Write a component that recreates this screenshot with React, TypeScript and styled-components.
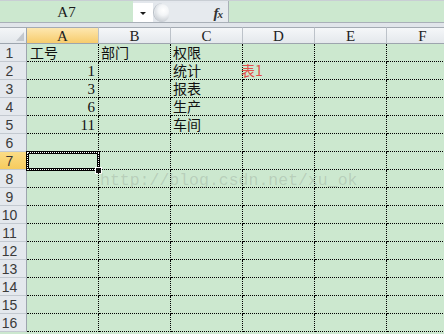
import React from 'react';
import styled, { createGlobalStyle } from 'styled-components';

const Global = createGlobalStyle`
  html, body { margin: 0; padding: 0; background: #fff; }
  body { width: 444px; height: 334px; overflow: hidden; }
`;

const GREEN = '#CCE8CF';

const Sheet = styled.div`
  width: 444px;
  height: 334px;
  overflow: hidden;
  display: flex;
  flex-direction: column;
  background: #e2e6eb;
`;

const FormulaBar = styled.div`
  display: flex;
  height: 23px;
  box-sizing: border-box;
  border-top: 1px solid #c9ced4;
  border-bottom: 1px solid #a9b0b8;
  background: ${GREEN};
  flex-shrink: 0;
`;

const NameBox = styled.div`
  width: 133px;
  display: flex;
  align-items: center;
  justify-content: center;
  font-family: 'Liberation Serif', serif;
  font-size: 15px;
  color: #1a1a1a;
  padding-top: 1px;
  box-sizing: border-box;
`;

const Controls = styled.div`
  display: flex;
  padding-top: 2px;
  background: #e3e7ec;
`;

const DropButton = styled.div`
  width: 20px;
  background: #fff;
  display: flex;
  align-items: center;
  justify-content: center;
  padding-top: 2px;
  box-sizing: border-box;
`;

const Arrow = styled.div`
  width: 0;
  height: 0;
  border-left: 3px solid transparent;
  border-right: 3px solid transparent;
  border-top: 3px solid #1a1a1a;
`;

const FxZone = styled.div`
  width: 75px;
  display: flex;
  align-items: center;
  justify-content: space-between;
  background: #e6eaee;
  border-radius: 10px 0 0 10px;
  border-left: 1px solid #b9bfc6;
  box-sizing: border-box;
  padding-right: 6px;
`;

const Knob = styled.div`
  width: 14px;
  height: 18px;
  border-radius: 9px;
  background: radial-gradient(circle at 60% 35%, #ffffff 0%, #f3f5f7 35%, #c9ced4 80%, #b5bcc4 100%);
  margin-left: 1px;
`;

const Fx = styled.span`
  font-family: 'Liberation Serif', serif;
  font-style: italic;
  font-weight: bold;
  font-size: 15px;
  color: #333;
  letter-spacing: -1px;
  padding-top: 1px;
  & > small {
    font-size: 11px;
  }
`;

const Divider = styled.div`
  width: 1px;
  background: #a9b0b8;
`;

const FormulaInput = styled.div`
  flex: 1;
  background: ${GREEN};
`;

const Band = styled.div`
  height: 4px;
  flex-shrink: 0;
  background: #e1e5ea;
`;

const Grid = styled.div`
  position: relative;
  display: grid;
  grid-template-columns: 27px repeat(6, 72px);
  grid-template-rows: 17px;
  grid-auto-rows: 18px;
  background: ${GREEN};
  flex: 1;
  align-content: start;
`;

const Corner = styled.div`
  box-sizing: border-box;
  border-top: 1px solid #a4abb3;
  border-right: 1px solid #9da5ae;
  border-bottom: 1px solid #9da5ae;
  background: linear-gradient(#f4f6f8, #e3e7eb);
  display: flex;
  align-items: flex-end;
  justify-content: flex-end;
  padding: 0 2px 2px 0;
`;

const ColHeader = styled.div<{ $active?: boolean }>`
  box-sizing: border-box;
  border-top: 1px solid #a4abb3;
  border-right: 1px solid #bcc2c9;
  border-bottom: 1px solid #9da5ae;
  background: ${(p) =>
    p.$active ? 'linear-gradient(#fde7b0, #f7cc6c)' : 'linear-gradient(#f5f7f9, #e4e8ec)'};
  font-family: 'Liberation Serif', serif;
  font-size: 15px;
  line-height: 15px;
  color: #222;
  text-align: center;
  padding-top: 1px;
`;

const RowHeader = styled.div<{ $active?: boolean }>`
  box-sizing: border-box;
  border-right: 1px solid #9da5ae;
  border-bottom: 1px solid #c3c9d0;
  background: ${(p) => (p.$active ? 'linear-gradient(#fbdc86, #f6cb5e)' : '#e4e8ed')};
  font-family: 'Liberation Sans', Arial, sans-serif;
  font-size: 14px;
  line-height: 17px;
  color: #3a3a3a;
  text-align: center;
  padding: 1px 7px 0 0;
`;

const Cell = styled.div<{ $align?: 'left' | 'right'; $color?: string }>`
  position: relative;
  box-sizing: border-box;
  border-right: 1px dotted #000;
  border-bottom: 1px dotted #000;
  font-size: 14px;
  line-height: 17px;
  color: ${(p) => p.$color || '#111'};
  text-align: ${(p) => p.$align || 'left'};
  padding: 0 3px;
  white-space: nowrap;
  overflow: visible;
`;

const Txt = styled.span<{ $cjk?: boolean; $shift?: number }>`
  position: relative;
  display: inline-block;
  font-family: ${(p) => (p.$cjk ? "'Noto Sans CJK SC', sans-serif" : "'Liberation Serif', serif")};
  font-size: ${(p) => (p.$cjk ? '14px' : '15px')};
  line-height: 14px;
  margin-left: ${(p) => p.$shift || 0}px;
  top: 1px;
`;

const ActiveBox = styled.div`
  position: absolute;
  left: -1px;
  top: -1px;
  width: 74px;
  height: 20px;
  box-sizing: border-box;
  border: 3px solid #000;
  pointer-events: none;
  &::before {
    content: '';
    position: absolute;
    inset: -2px;
    border: 1px dotted #fff;
  }
`;

const FillHandle = styled.div`
  position: absolute;
  left: 69px;
  top: 16px;
  width: 5px;
  height: 5px;
  background: #111;
  outline: 1px solid #fff;
`;

const Watermark = styled.div`
  position: absolute;
  left: 100px;
  top: 145px;
  font-family: 'Liberation Mono', monospace;
  font-size: 16.5px;
  line-height: 17px;
  color: rgba(100, 100, 100, 0.2);
  white-space: nowrap;
  pointer-events: none;
`;

type CellData = { text: string; cjk?: boolean; align?: 'left' | 'right'; color?: string; shift?: number };

const cols = ['A', 'B', 'C', 'D', 'E', 'F'];

const data: Record<string, CellData> = {
  A1: { text: '工号', cjk: true },
  B1: { text: '部门', cjk: true, shift: -1 },
  C1: { text: '权限', cjk: true, shift: -1 },
  A2: { text: '1', align: 'right' },
  A3: { text: '3', align: 'right' },
  A4: { text: '6', align: 'right' },
  A5: { text: '11', align: 'right' },
  C2: { text: '统计', cjk: true, shift: -1 },
  C3: { text: '报表', cjk: true, shift: -1 },
  C4: { text: '生产', cjk: true, shift: -1 },
  C5: { text: '车间', cjk: true, shift: -1 },
  D2: { text: '表1', cjk: true, color: '#e2504a', shift: -5 },
};

const ROWS = 16;

export default function App() {
  return (
    <>
      <Global />
      <Sheet>
        <FormulaBar>
          <NameBox>A7</NameBox>
          <Controls>
            <DropButton>
              <Arrow />
            </DropButton>
            <FxZone>
              <Knob />
              <Fx>
                f<small>x</small>
              </Fx>
            </FxZone>
          </Controls>
          <Divider />
          <FormulaInput />
        </FormulaBar>
        <Band />
        <Grid>
          <Corner>
            <svg width="8" height="9" viewBox="0 0 8 9">
              <polygon points="8,0 8,9 0,9" fill="#c3c8ce" />
            </svg>
          </Corner>
          {cols.map((c) => (
            <ColHeader key={c} $active={c === 'A'}>
              {c}
            </ColHeader>
          ))}
          {Array.from({ length: ROWS }, (_, i) => i + 1).map((r) => (
            <React.Fragment key={r}>
              <RowHeader $active={r === 7}>{r}</RowHeader>
              {cols.map((c) => {
                const d = data[`${c}${r}`];
                return (
                  <Cell key={c} $align={d?.align} $color={d?.color}>
                    {d && (
                      <Txt $cjk={d.cjk} $shift={d.shift}>
                        {d.text}
                      </Txt>
                    )}
                    {c === 'A' && r === 7 && (
                      <>
                        <ActiveBox />
                        <FillHandle />
                      </>
                    )}
                  </Cell>
                );
              })}
            </React.Fragment>
          ))}
          <Watermark>http://blog.csdn.net/xu_ok</Watermark>
        </Grid>
      </Sheet>
    </>
  );
}
